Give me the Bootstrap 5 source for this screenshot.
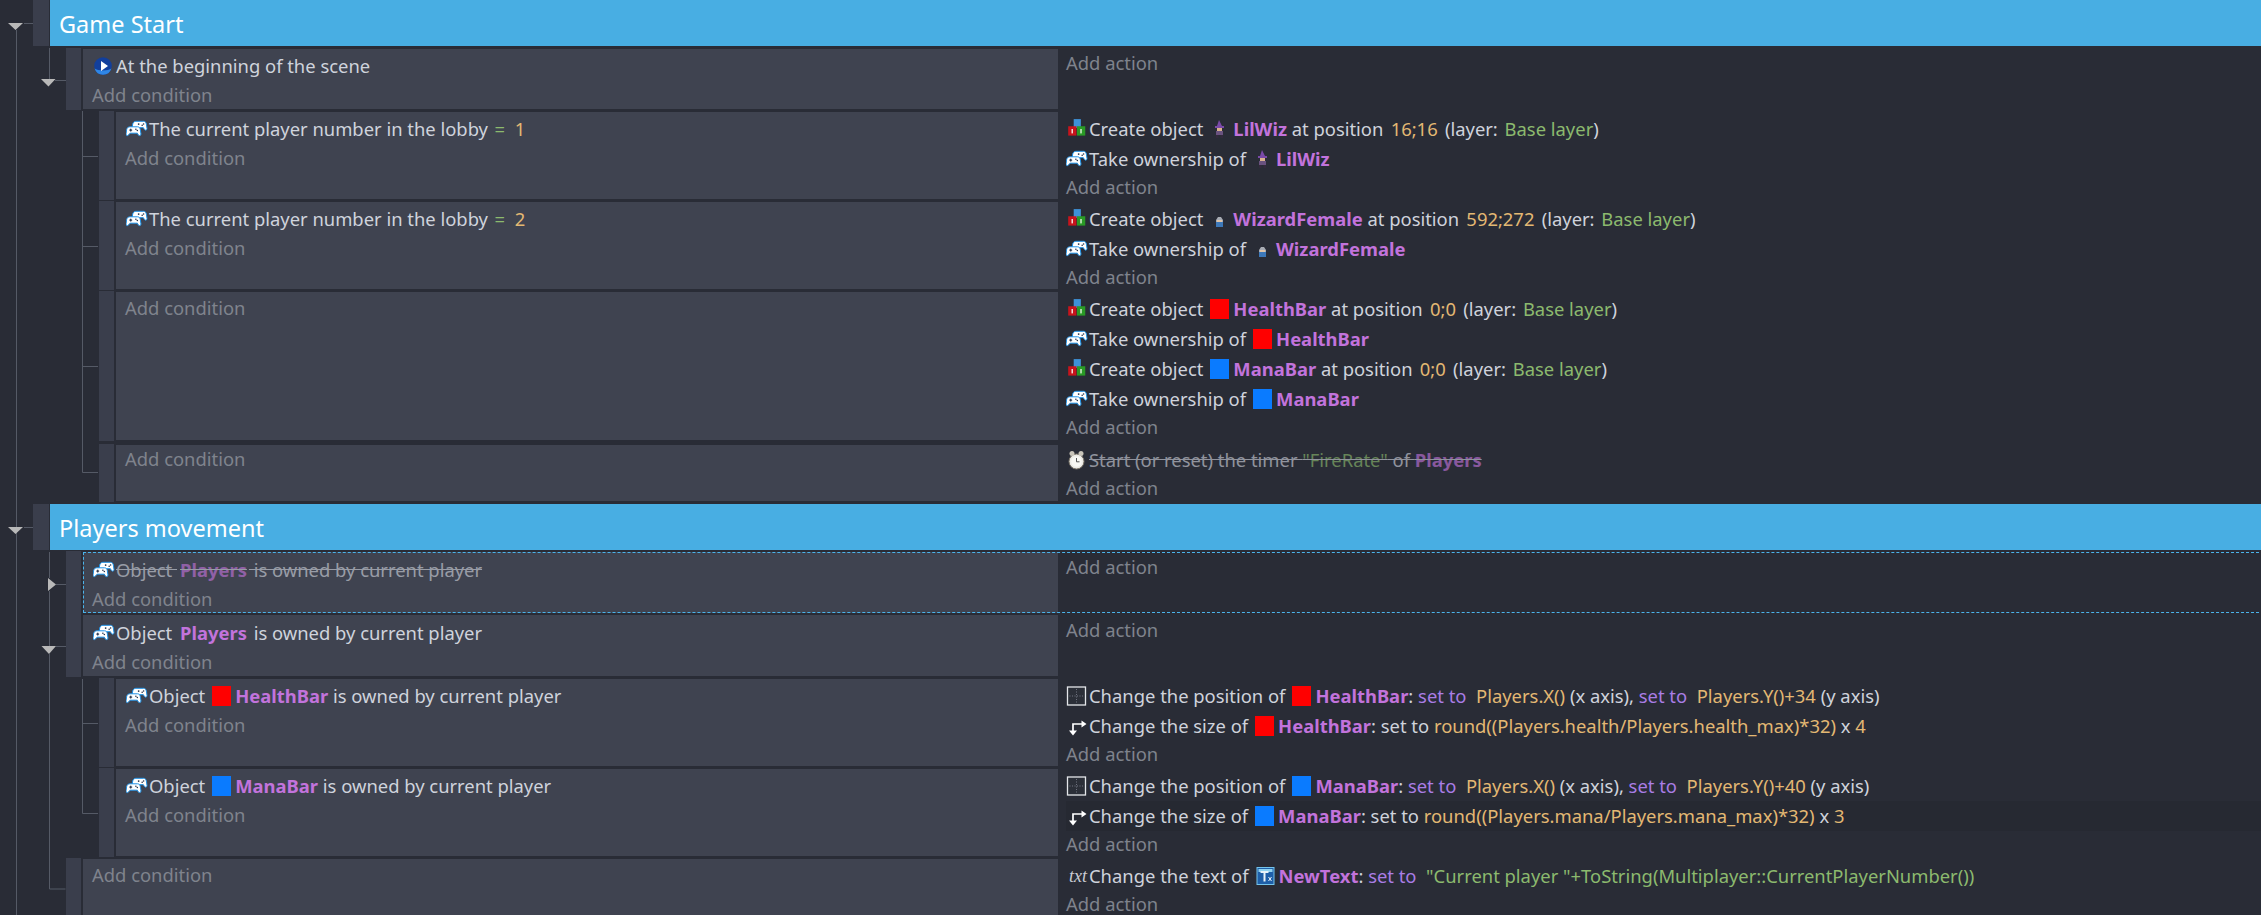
<!doctype html>
<html lang="en"><head><meta charset="utf-8"><title>Events</title>
<link href="https://cdn.jsdelivr.net/npm/bootstrap@5.3.0/dist/css/bootstrap.min.css" rel="stylesheet">
<script src="https://cdn.jsdelivr.net/npm/bootstrap@5.3.0/dist/js/bootstrap.bundle.min.js"></script>
<style>
html,body{background:#292c36;font-family:"Noto Sans","Open Sans",sans-serif;font-size:18.4px;color:#cfd3dc}
.sheet{height:915px;position:relative}
.tree{position:absolute;left:0;top:0}
.rw{margin-top:3px}
.rw.gap2{margin-top:2px}
.lv0{margin-left:33px;height:46px}
.lv0.first{margin-top:0}
.lv1{margin-left:66px}
.lv2{margin-left:99px}
.h-a{height:60px}.h-b{height:87px}.h-c{height:148px}.h-d{height:56px}.h-e{height:61px}.h-f{height:90px}
.grip{width:15px;margin:-1px 2px -1px 0;background:#3a3e4c;flex:none}
.lv0 .grip{width:16px;margin:0 1px 0 0}
.band{background:#48aee3;color:#fff;font-size:23.5px;line-height:48px;padding-left:9px}
.cnd{background:#3f4350;padding:2px 0 0 9px;flex:none}
.lv1 .cnd{width:975px}.lv2 .cnd{width:942px}
.act{padding:2px 0 0 8px;min-width:0}
.h-a .act{padding-top:1px}
.h-d .cnd,.h-d .act{padding-top:0}
.h-e .cnd{padding-top:3px}
.ln{line-height:30px;height:30px;white-space:nowrap;display:flex;align-items:center}
.ln>span.tx{white-space:pre}
.cnd .ln{padding-left:1px}
.hov{background:#262932}
.adc{line-height:28px;color:#7f838d}
.ada{line-height:25px;color:#7f838d}
.ob{color:#c273dc;font-weight:700}
.ob.gp{margin-left:3px;margin-right:2px}
.nm{color:#e3b873}
.st{color:#8cba6e}
.op{color:#a97de6}
.nm.gp{margin:0 2.500px}
.st.gp{margin-left:2px}
.st.eq{margin-left:-3px}
.ic{width:22px;height:22px;margin-right:1px;flex:none}
.sw{width:19px;height:20px;margin:0 4px 0 7px;flex:none;display:block}
.sw.red{background:#f00}.sw.blue{background:#0a7bff}
.off{text-decoration:line-through;opacity:.62}
.tico{font-family:"Liberation Serif",serif;font-style:italic;font-size:18px;color:#c9ccd4;width:22px;margin-right:1px;flex:none;padding-left:3px}
.picked{outline:1px dashed #4bb3ea;outline-offset:-1px;min-width:0;margin-right:-3px}
</style></head>
<body class="overflow-hidden m-0">
<svg class="d-none"><defs>
<path id="onepad" d="M2.500 0h7c1.500 0 2.300 1.200 2.500 2.500l.6 4c.1 1.600-1.500 2.100-2.400.9L9.300 5.800H2.700L1.300 7.400C.4 8.600-1.200 8.100-1 6.500l.6-4C-.2 1.200 1 0 2.500 0z"/>
<symbol id="pad" viewBox="1 3 20 15">
<g stroke="#1a90e6" stroke-width=".9" fill="#fff"><use href="#onepad" x="7.500" y="3.500"/><use href="#onepad" x="2" y="8.500"/></g>
<g fill="#26324a"><rect x="4" y="11" width="2.600" height="1"/><rect x="4.800" y="10.200" width="1" height="2.600"/><circle cx="10" cy="10.800" r=".7"/><circle cx="11.300" cy="11.800" r=".7"/><circle cx="17" cy="6" r=".7"/><circle cx="15.700" cy="7" r=".7"/><circle cx="12.500" cy="6" r=".8"/></g>
</symbol>
<symbol id="cube" viewBox="0 1 20 20">
<rect x="7" y="2" width="6.500" height="8" fill="#3d92d8"/><rect x="2" y="8.500" width="7.500" height="8.500" fill="#c8141c"/><rect x="10" y="8.500" width="7.500" height="8.500" fill="#2a9a26"/><rect x="5" y="11" width="1.300" height="4" fill="#f5e8e0"/><rect x="13" y="11" width="1.300" height="4" fill="#dff2d8"/>
</symbol>
<symbol id="go" viewBox="0 0 22 22">
<circle cx="10" cy="11" r="8.800" fill="#123f9c"/><path d="M1.600 13.500a8.800 8.800 0 0 0 16.800 0c-3 2.500-13.800 2.500-16.800 0z" fill="#2f86e6"/><path d="M8 6l7 5-7 5z" fill="#fff"/>
</symbol>
<symbol id="pos" viewBox="0 0 22 22">
<rect x="1.500" y="2" width="18" height="18" fill="#2b2f38" stroke="#e4e6ea" stroke-width="1.300"/><path d="M10.500 4v14M3.500 11h14" stroke="#707480" stroke-dasharray="1 1.500" fill="none"/>
</symbol>
<symbol id="size" viewBox="0 0 22 22">
<path d="M7 17V9h9" fill="none" stroke="#fff" stroke-width="1.700"/><path d="M15.500 5.500l5 3.500-5 3.500zM3 15.500h8l-4 5z" fill="#fff"/>
</symbol>
<symbol id="clock" viewBox="0 0 22 22">
<circle cx="10.500" cy="12.500" r="7.500" fill="#ecebe6" stroke="#7a7468"/><circle cx="10.500" cy="12.500" r="5.300" fill="#f8f8f4"/><path d="M10.500 9v3.800h3" stroke="#555" fill="none"/><circle cx="6" cy="4.500" r="2.500" fill="#c9c5ba"/><circle cx="15" cy="4.500" r="2.500" fill="#c9c5ba"/>
</symbol>
<symbol id="lil" viewBox="0 0 19 20">
<path d="M9 1l3 6h2v2H5V7h2z" fill="#7a49a8"/><rect x="7" y="9" width="5" height="3" fill="#d9b18e"/><rect x="6" y="12" width="7" height="4" fill="#69527e"/><rect x="6" y="16" width="2.500" height="3" fill="#332a3c"/><rect x="10.500" y="16" width="2.500" height="3" fill="#332a3c"/>
</symbol>
<symbol id="wf" viewBox="0 0 19 20">
<path d="M8 8h3l2 3v2H6v-2z" fill="#a8acb4"/><rect x="7" y="11" width="5" height="2" fill="#e0c4a8"/><rect x="6" y="13" width="7" height="5" fill="#3d78b8"/>
</symbol>
<symbol id="txo" viewBox="0 0 18 20">
<rect x=".5" y="1.500" width="17" height="17" fill="#1e5fa8" stroke="#74c4ec"/><rect x="2" y="3" width="14" height="3" fill="#8fd2f0"/><path d="M4 5h8v2H9v8.500H7V7H4z" fill="#e8f4fa"/>
<path d="M12 11l3 4M15 11l-3 4" stroke="#e8f4fa"/>
</symbol>
</defs></svg>
<div class="sheet">
<svg class="tree" width="130" height="915" fill="none" stroke="#555a66">
<path d="M16.500 30V915M24 23.500h9M24 527.500h9M49.500 48v32M55 80.500h11M49.500 552v26M56 584.500h10M49.500 591v55M56 646.500h10M49.500 654v235h16"/>
<path d="M82.500 111V472.500H98M82.500 156.500H98M82.500 246.500H98M82.500 366.500H98M82.500 679V813.500H98M82.500 723.500H98"/>
<path d="M8 23h15l-7.500 7zM8 527h15l-7.500 7zM41 79h14.500l-7 7.500zM48 578v13l8-6.500zM41.500 646h14.500l-7 8z" fill="#b9b9b9" stroke="none"/>
</svg>

<div class="d-flex rw lv0 first"><div class="grip"></div><div class="band flex-grow-1">Game Start</div></div>

<div class="d-flex rw lv1 h-a"><div class="grip"></div>
<div class="cnd"><div class="ln"><svg class="ic"><use href="#go"/></svg><span class="tx">At the beginning of the scene</span></div><div class="adc">Add condition</div></div>
<div class="act flex-grow-1"><div class="ada">Add action</div></div></div>

<div class="d-flex rw lv2 h-b"><div class="grip"></div>
<div class="cnd"><div class="ln"><svg class="ic"><use href="#pad"/></svg><span class="tx">The current player number in the lobby  <span class="st eq">=</span>  <span class="nm">1</span></span></div><div class="adc">Add condition</div></div>
<div class="act flex-grow-1">
<div class="ln"><svg class="ic"><use href="#cube"/></svg><span class="tx">Create object</span><svg class="sw"><use href="#lil"/></svg><span class="tx"><span class="ob">LilWiz</span> at position <span class="nm gp">16;16</span> (layer: <span class="st gp">Base layer</span>)</span></div>
<div class="ln"><svg class="ic"><use href="#pad"/></svg><span class="tx">Take ownership of</span><svg class="sw"><use href="#lil"/></svg><span class="tx ob">LilWiz</span></div>
<div class="ada">Add action</div></div></div>

<div class="d-flex rw lv2 h-b"><div class="grip"></div>
<div class="cnd"><div class="ln"><svg class="ic"><use href="#pad"/></svg><span class="tx">The current player number in the lobby  <span class="st eq">=</span>  <span class="nm">2</span></span></div><div class="adc">Add condition</div></div>
<div class="act flex-grow-1">
<div class="ln"><svg class="ic"><use href="#cube"/></svg><span class="tx">Create object</span><svg class="sw"><use href="#wf"/></svg><span class="tx"><span class="ob">WizardFemale</span> at position <span class="nm gp">592;272</span> (layer: <span class="st gp">Base layer</span>)</span></div>
<div class="ln"><svg class="ic"><use href="#pad"/></svg><span class="tx">Take ownership of</span><svg class="sw"><use href="#wf"/></svg><span class="tx ob">WizardFemale</span></div>
<div class="ada">Add action</div></div></div>

<div class="d-flex rw lv2 h-c"><div class="grip"></div>
<div class="cnd"><div class="adc">Add condition</div></div>
<div class="act flex-grow-1">
<div class="ln"><svg class="ic"><use href="#cube"/></svg><span class="tx">Create object</span><i class="sw red"></i><span class="tx"><span class="ob">HealthBar</span> at position <span class="nm gp">0;0</span> (layer: <span class="st gp">Base layer</span>)</span></div>
<div class="ln"><svg class="ic"><use href="#pad"/></svg><span class="tx">Take ownership of</span><i class="sw red"></i><span class="tx ob">HealthBar</span></div>
<div class="ln"><svg class="ic"><use href="#cube"/></svg><span class="tx">Create object</span><i class="sw blue"></i><span class="tx"><span class="ob">ManaBar</span> at position <span class="nm gp">0;0</span> (layer: <span class="st gp">Base layer</span>)</span></div>
<div class="ln"><svg class="ic"><use href="#pad"/></svg><span class="tx">Take ownership of</span><i class="sw blue"></i><span class="tx ob">ManaBar</span></div>
<div class="ada">Add action</div></div></div>

<div class="d-flex rw mt-1 lv2 h-d"><div class="grip"></div>
<div class="cnd"><div class="adc">Add condition</div></div>
<div class="act flex-grow-1">
<div class="ln"><svg class="ic"><use href="#clock"/></svg><span class="tx off">Start (or reset) the timer <span class="st">"FireRate"</span> of <span class="ob">Players</span></span></div>
<div class="ada">Add action</div></div></div>

<div class="d-flex rw lv0"><div class="grip"></div><div class="band flex-grow-1">Players movement</div></div>

<div class="d-flex rw gap2 lv1 h-e"><div class="grip"></div>
<div class="d-flex flex-grow-1 picked">
<div class="cnd"><div class="ln"><svg class="ic"><use href="#pad"/></svg><span class="tx off">Object <span class="ob gp">Players</span> is owned by current player</span></div><div class="adc">Add condition</div></div>
<div class="act flex-grow-1"><div class="ada">Add action</div></div></div></div>

<div class="d-flex rw gap2 lv1 h-e"><div class="grip"></div>
<div class="cnd"><div class="ln"><svg class="ic"><use href="#pad"/></svg><span class="tx">Object <span class="ob gp">Players</span> is owned by current player</span></div><div class="adc">Add condition</div></div>
<div class="act flex-grow-1"><div class="ada">Add action</div></div></div>

<div class="d-flex rw lv2 h-b"><div class="grip"></div>
<div class="cnd"><div class="ln"><svg class="ic"><use href="#pad"/></svg><span class="tx">Object</span><i class="sw red"></i><span class="tx"><span class="ob">HealthBar</span> is owned by current player</span></div><div class="adc">Add condition</div></div>
<div class="act flex-grow-1">
<div class="ln"><svg class="ic"><use href="#pos"/></svg><span class="tx">Change the position of</span><i class="sw red"></i><span class="tx"><span class="ob">HealthBar</span>: <span class="op">set to</span>  <span class="nm">Players.X()</span> (x axis), <span class="op">set to</span>  <span class="nm">Players.Y()+34</span> (y axis)</span></div>
<div class="ln"><svg class="ic"><use href="#size"/></svg><span class="tx">Change the size of</span><i class="sw red"></i><span class="tx"><span class="ob">HealthBar</span>: set to <span class="nm">round((Players.health/Players.health_max)*32)</span> x <span class="nm">4</span></span></div>
<div class="ada">Add action</div></div></div>

<div class="d-flex rw lv2 h-b"><div class="grip"></div>
<div class="cnd"><div class="ln"><svg class="ic"><use href="#pad"/></svg><span class="tx">Object</span><i class="sw blue"></i><span class="tx"><span class="ob">ManaBar</span> is owned by current player</span></div><div class="adc">Add condition</div></div>
<div class="act flex-grow-1">
<div class="ln"><svg class="ic"><use href="#pos"/></svg><span class="tx">Change the position of</span><i class="sw blue"></i><span class="tx"><span class="ob">ManaBar</span>: <span class="op">set to</span>  <span class="nm">Players.X()</span> (x axis), <span class="op">set to</span>  <span class="nm">Players.Y()+40</span> (y axis)</span></div>
<div class="ln hov"><svg class="ic"><use href="#size"/></svg><span class="tx">Change the size of</span><i class="sw blue"></i><span class="tx"><span class="ob">ManaBar</span>: set to <span class="nm">round((Players.mana/Players.mana_max)*32)</span> x <span class="nm">3</span></span></div>
<div class="ada">Add action</div></div></div>

<div class="d-flex rw lv1 h-f"><div class="grip"></div>
<div class="cnd"><div class="adc">Add condition</div></div>
<div class="act flex-grow-1">
<div class="ln"><span class="tico">txt</span><span class="tx">Change the text of</span><svg class="sw"><use href="#txo"/></svg><span class="tx"><span class="ob">NewText</span>: <span class="op">set to</span>  <span class="st">"Current player "+ToString(Multiplayer::CurrentPlayerNumber())</span></span></div>
<div class="ada">Add action</div></div></div>
</div>
</body></html>
